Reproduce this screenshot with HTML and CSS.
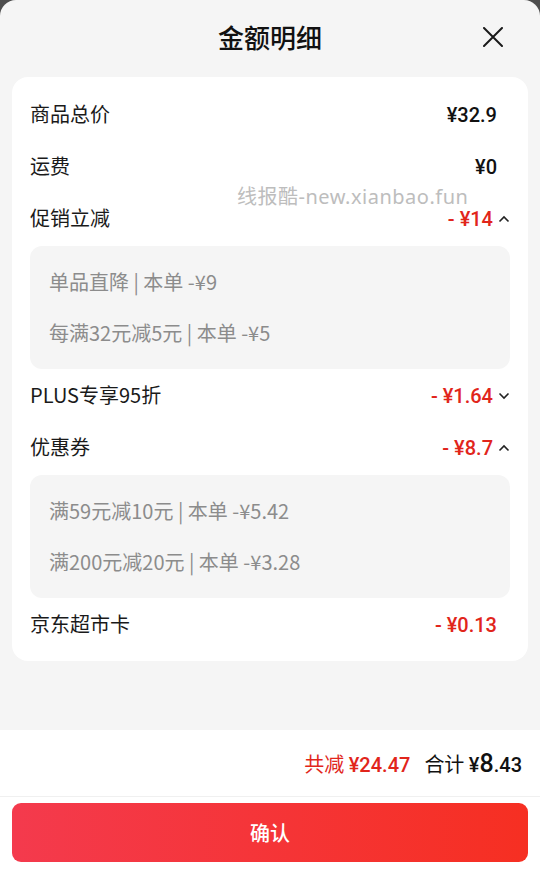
FILE: index.html
```html
<!DOCTYPE html>
<html lang="zh-CN">
<head>
    <meta charset="UTF-8">
    <meta name="viewport" content="width=device-width, initial-scale=1.0">
    <title>金额明细</title>
    <link rel="stylesheet" href="styles.css">
</head>
<body>
    <div class="sheet">
        <div class="header">
            <h1 class="title">金额明细</h1>
            <button class="close" aria-label="关闭">
                <svg width="20" height="20" viewBox="0 0 20 20"><path d="M1 1L19 19M19 1L1 19" stroke="#1a1a1a" stroke-width="2" fill="none" stroke-linecap="round"/></svg>
            </button>
        </div>

        <div class="card">
            <div class="watermark">线报酷-new.xianbao.fun</div>

            <div class="row">
                <span class="label">商品总价</span>
                <span class="value plain">¥32.9</span>
            </div>
            <div class="row">
                <span class="label">运费</span>
                <span class="value plain">¥0</span>
            </div>
            <div class="row">
                <span class="label">促销立减</span>
                <span class="value red">- ¥14<svg class="chev" width="12" height="8" viewBox="0 0 12 8"><path d="M1.5 6.5L6 2L10.5 6.5" stroke="#222" stroke-width="1.6" fill="none"/></svg></span>
            </div>
            <div class="sub">
                <div class="sub-item">单品直降 | 本单 -¥9</div>
                <div class="sub-item">每满32元减5元 | 本单 -¥5</div>
            </div>
            <div class="row">
                <span class="label">PLUS专享95折</span>
                <span class="value red">- ¥1.64<svg class="chev" width="12" height="8" viewBox="0 0 12 8"><path d="M1.5 1.5L6 6L10.5 1.5" stroke="#222" stroke-width="1.6" fill="none"/></svg></span>
            </div>
            <div class="row">
                <span class="label">优惠券</span>
                <span class="value red">- ¥8.7<svg class="chev" width="12" height="8" viewBox="0 0 12 8"><path d="M1.5 6.5L6 2L10.5 6.5" stroke="#222" stroke-width="1.6" fill="none"/></svg></span>
            </div>
            <div class="sub">
                <div class="sub-item">满59元减10元 | 本单 -¥5.42</div>
                <div class="sub-item">满200元减20元 | 本单 -¥3.28</div>
            </div>
            <div class="row">
                <span class="label">京东超市卡</span>
                <span class="value red plain">- ¥0.13</span>
            </div>
        </div>

        <div class="footer">
            <div class="summary">
                <span class="saved">共减 <b>¥24.47</b></span>
                <span class="total">合计 <span class="num">¥<big>8</big>.43</span></span>
            </div>
            <div class="actions">
                <button class="confirm">确认</button>
            </div>
        </div>
    </div>
</body>
</html>
```

FILE: styles.css
```css
body {
    margin: 0;
    background: #4d4d4d;
    font-family: "Noto Sans CJK SC", "Noto Sans", sans-serif;
    color: #1a1a1a;
}
.sheet {
    height: 877px;
    background: #f5f5f5;
    border-radius: 16px 16px 0 0;
    display: flex;
    flex-direction: column;
    overflow: hidden;
}
.header {
    height: 74px;
    display: flex;
    align-items: center;
    justify-content: center;
    position: relative;
}
.title {
    margin: 0 0 2px;
    font-size: 26px;
    font-weight: 500;
    color: #111;
}
.close {
    position: absolute;
    right: 37px;
    top: 27px;
    width: 20px;
    height: 20px;
    padding: 0;
    border: none;
    background: none;
}
.close svg {
    display: block;
}
.card {
    position: relative;
    margin: 3px 12px 0;
    padding: 12px 18px 10px;
    background: #fff;
    border-radius: 16px;
}
.watermark {
    position: absolute;
    left: 225px;
    top: 104px;
    font-family: "Noto Sans", "Noto Sans CJK SC", sans-serif;
    font-size: 20px;
    letter-spacing: 0.5px;
    color: #bdbdbd;
    white-space: nowrap;
}
.row {
    height: 52px;
    display: flex;
    align-items: center;
    justify-content: space-between;
}
.label {
    font-size: 20px;
    color: #1a1a1a;
    margin-bottom: 3px;
}
.value {
    display: flex;
    align-items: center;
    font-family: Roboto, "Noto Sans", sans-serif;
    font-size: 20px;
    font-weight: 500;
    color: #111;
}
.value.plain {
    margin-right: 13px;
}
.value.red {
    color: #e1251b;
}
.chev {
    margin-left: 5px;
}
.sub {
    margin: 1px 0;
    padding: 10px 19px 11px;
    background: #f5f5f5;
    border-radius: 12px;
}
.sub-item {
    height: 51px;
    display: flex;
    align-items: center;
    font-size: 20px;
    color: #8c8c8c;
}
.footer {
    margin-top: auto;
    height: 147px;
    background: #fff;
}
.summary {
    height: 66px;
    display: flex;
    align-items: center;
    justify-content: flex-end;
    gap: 14px;
    padding-right: 18px;
    border-bottom: 1px solid #f0f0f0;
}
.saved {
    font-size: 20px;
    color: #e1251b;
}
.saved b {
    font-family: Roboto, "Noto Sans", sans-serif;
    font-size: 20px;
    font-weight: 500;
}
.total {
    font-size: 20px;
    color: #111;
}
.total .num {
    font-family: Roboto, "Noto Sans", sans-serif;
    font-weight: 500;
}
.total big {
    font-size: 25px;
}
.actions {
    padding: 6px 12px 0;
}
.confirm {
    width: 100%;
    height: 59px;
    border: none;
    border-radius: 9px;
    background: linear-gradient(90deg, #f43a4d, #f62f22);
    color: #fff;
    font-family: "Noto Sans CJK SC", sans-serif;
    font-size: 20px;
    font-weight: 500;
}
```
